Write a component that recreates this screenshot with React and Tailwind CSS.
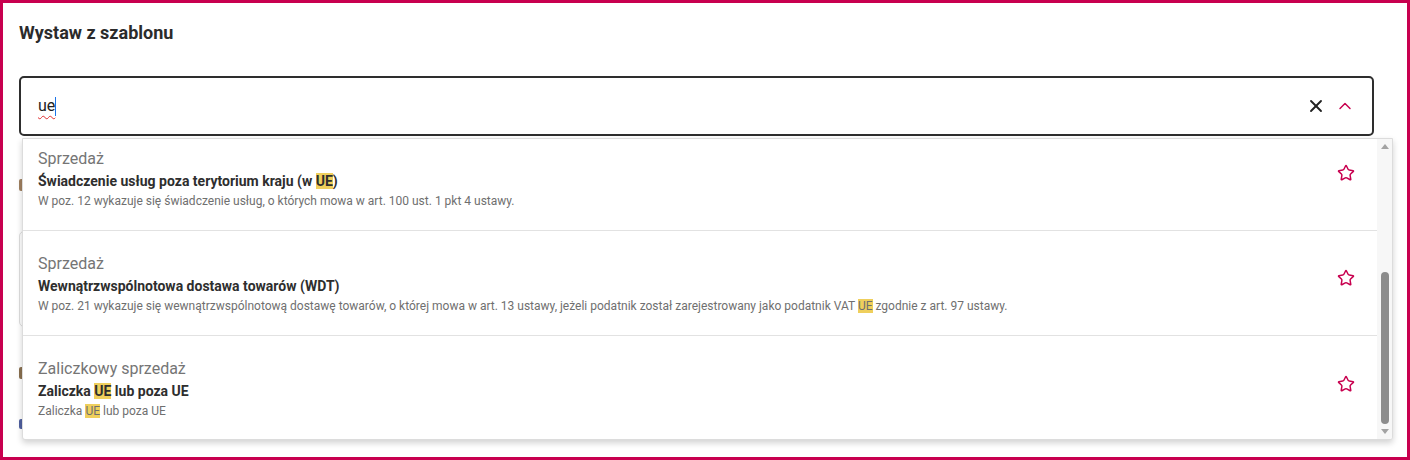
import React from 'react';
import { X, ChevronUp, Star } from 'lucide-react';

const templates = [
  {
    category: 'Sprzedaż',
    title: ['Świadczenie usług poza terytorium kraju (w ', { hl: 'UE' }, ')'],
    desc: ['W poz. 12 wykazuje się świadczenie usług, o których mowa w art. 100 ust. 1 pkt 4 ustawy.'],
  },
  {
    category: 'Sprzedaż',
    title: ['Wewnątrzwspólnotowa dostawa towarów (WDT)'],
    desc: [
      'W poz. 21 wykazuje się wewnątrzwspólnotową dostawę towarów, o której mowa w art. 13 ustawy, jeżeli podatnik został zarejestrowany jako podatnik VAT ',
      { hl: 'UE' },
      ' zgodnie z art. 97 ustawy.',
    ],
  },
  {
    category: 'Zaliczkowy sprzedaż',
    title: ['Zaliczka ', { hl: 'UE' }, ' lub poza UE'],
    desc: ['Zaliczka ', { hl: 'UE' }, ' lub poza UE'],
  },
];

function Rich({ parts }) {
  return parts.map((p, i) =>
    typeof p === 'string' ? (
      <React.Fragment key={i}>{p}</React.Fragment>
    ) : (
      <span key={i} className="bg-[#efcf5c]">{p.hl}</span>
    )
  );
}

function TemplateRow({ item, last }) {
  return (
    <div className={`flex items-center pl-[15px] pr-6 h-[105px] ${last ? '' : 'border-b border-[#e2e2e2]'}`}>
      <div className="flex-1 pt-[1px]">
        <div className="text-[16px] leading-[20px] text-[#757575]">{item.category}</div>
        <div className="mt-[2px] text-[14px] leading-[20px] font-bold text-[#2e2e2e]">
          <Rich parts={item.title} />
        </div>
        <div className="mt-[2px] text-[12px] leading-[16px] text-[#6f6f6f]">
          <Rich parts={item.desc} />
        </div>
      </div>
      <Star className="w-[18px] h-[18px] text-[#c8004f] mt-[-10px] mr-[-2px]" strokeWidth={2} />
    </div>
  );
}

export default function App() {
  return (
    <div
      className="h-[460px] w-full border-[3px] border-[#c8004f] bg-white px-4 overflow-hidden"
      style={{ fontFamily: 'Roboto, "Noto Sans", sans-serif' }}
    >
      <h2 className="pt-[18px] text-[18px] leading-[24px] font-bold text-[#2b2b2b]">Wystaw z szablonu</h2>

      <div className="relative mt-[31px] w-[1355px]">
        {/* Search input */}
        <div className="h-[60px] border-2 border-[#2e2e2e] rounded-[5px] flex items-center pl-[17px] pr-[17px] bg-white">
          <span className="text-[16px] text-[#222] underline decoration-wavy decoration-[#e03030] decoration-[1px] underline-offset-[4px]">ue</span>
          <span className="w-[1px] h-[19px] bg-[#1a73e8]" />
          <div className="flex-1" />
          <X className="w-[20px] h-[20px] text-[#222]" strokeWidth={2.25} />
          <ChevronUp className="ml-[9px] w-[20px] h-[20px] text-[#c8004f]" strokeWidth={1.75} />
        </div>

        {/* Background form content (covered by dropdown) */}
        <div className="pt-[43px]">
          <div className="w-[40px] h-[12px] rounded-[2px] bg-[#a08060]" />
          <div className="mt-[40px] h-[96px] border border-[#dedede] rounded-[5px]" />
          <div className="mt-[40px] w-[40px] h-[12px] rounded-[2px] bg-[#8a7050]" />
          <div className="mt-[40px] w-[40px] h-[10px] rounded-[2px] bg-[#5060a0]" />
        </div>

        {/* Dropdown */}
        <div className="absolute left-[3px] top-[62px] w-[1371px] h-[302px] bg-white border border-[#dcdcdc] rounded-b-[3px] shadow-[0_3px_6px_rgba(0,0,0,0.18)] flex overflow-hidden">
          <div className="flex-1 overflow-hidden">
            <div className="-mt-[13px]">
              {templates.map((t, i) => (
                <TemplateRow key={i} item={t} last={i === templates.length - 1} />
              ))}
            </div>
          </div>
          <div className="w-[15px] bg-[#f7f7f7] flex flex-col items-center py-[5px]">
            <div className="w-0 h-0 border-l-[4px] border-r-[4px] border-b-[5px] border-l-transparent border-r-transparent border-b-[#a3a3a3]" />
            <div className="flex-1 w-full flex flex-col items-center justify-end pb-[5px]">
              <div className="w-[8px] h-[152px] rounded-full bg-[#8c8c8c]" />
            </div>
            <div className="w-0 h-0 border-l-[4px] border-r-[4px] border-t-[5px] border-l-transparent border-r-transparent border-t-[#a3a3a3]" />
          </div>
        </div>
      </div>
    </div>
  );
}
